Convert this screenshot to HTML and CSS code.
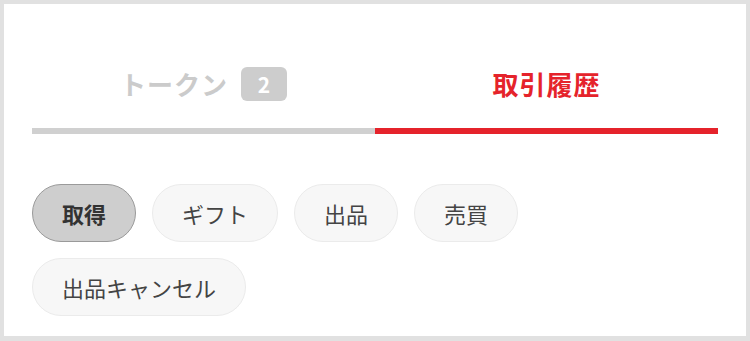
FILE: index.html
```html
<!DOCTYPE html>
<html lang="ja">
<head>
    <meta charset="UTF-8">
    <meta name="viewport" content="width=device-width, initial-scale=1.0">
    <title>取引履歴</title>
    <link rel="stylesheet" href="styles.css">
</head>
<body>
    <div class="panel">
        <div class="tabs">
            <div class="tab">
                トークン<span class="badge">2</span>
            </div>
            <div class="tab active">取引履歴</div>
        </div>

        <div class="chips">
            <button class="chip selected">取得</button>
            <button class="chip">ギフト</button>
            <button class="chip">出品</button>
            <button class="chip">売買</button>
            <button class="chip">出品キャンセル</button>
        </div>
    </div>
</body>
</html>
```

FILE: styles.css
```css
* {
    margin: 0;
    padding: 0;
    box-sizing: border-box;
}

body {
    font-family: "Noto Sans CJK JP", "Noto Sans", sans-serif;
    background: #e1e1e1;
    padding: 4px 4px 5px 4px;
    height: 341px;
    color: #333;
}

.panel {
    background: #fff;
    height: 100%;
    padding: 0 28px;
}

.tabs {
    display: flex;
}

.tab {
    flex: 1;
    display: flex;
    align-items: center;
    justify-content: center;
    height: 130px;
    padding-top: 60px;
    padding-bottom: 24px;
    border-bottom: 6px solid #d0d0d0;
    font-size: 26px;
    font-weight: 700;
    letter-spacing: 1px;
    line-height: 40px;
    color: #cbcbcb;
}

.tab.active {
    color: #e5232b;
    border-bottom-color: #e5232b;
}

.badge {
    display: inline-flex;
    align-items: center;
    justify-content: center;
    width: 46px;
    height: 34px;
    margin-left: 13px;
    border-radius: 6px;
    background: #cdcdcd;
    color: #fff;
    font-size: 21px;
    letter-spacing: 0;
}

.chips {
    display: flex;
    flex-wrap: wrap;
    gap: 16px;
    padding-top: 50px;
}

.chip {
    height: 58px;
    padding: 0 29px;
    border: 1px solid #ebebeb;
    border-radius: 29px;
    background: #f7f7f7;
    font-family: inherit;
    font-size: 22px;
    color: #444;
    line-height: 1;
}

.chip.selected {
    background: #cecece;
    border-color: #9a9a9a;
    font-weight: 700;
    color: #333;
}
```
